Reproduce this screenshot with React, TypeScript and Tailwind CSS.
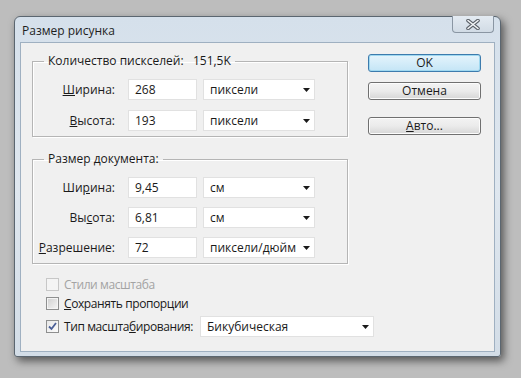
import React from 'react';

const Arrow: React.FC = () => (
  <svg width="7" height="4" viewBox="0 0 7 4" className="shrink-0">
    <path d="M0 0h7L3.5 4z" fill="#1a1a1a" />
  </svg>
);

const Input: React.FC<{ value: string }> = ({ value }) => (
  <div className="w-[69px] h-[21px] bg-white border border-[#e1e1e1] pl-[6px] flex items-center text-[#1a1a1a]">
    {value}
  </div>
);

const Select: React.FC<{ value: string; width?: string }> = ({ value, width = 'w-[112px]' }) => (
  <div className={`${width} shrink-0 h-[21px] bg-white border border-[#e1e1e1] pl-[6px] pr-[4px] flex items-center justify-between text-[#1a1a1a]`}>
    <span className="whitespace-nowrap">{value}</span>
    <Arrow />
  </div>
);

const Row: React.FC<{ label: React.ReactNode; value: string; unit: string }> = ({ label, value, unit }) => (
  <div className="flex items-center">
    <div className="w-[82px] text-right text-[#1a1a1a]">{label}</div>
    <div className="ml-[13px]">
      <Input value={value} />
    </div>
    <div className="ml-[6px]">
      <Select value={unit} />
    </div>
  </div>
);

const GroupBox: React.FC<{ title: React.ReactNode; children: React.ReactNode; gap: string }> = ({ title, children, gap }) => (
  <fieldset className="w-[316px] border border-[#b5b5b5] shadow-[inset_1px_1px_0_#fff,1px_1px_0_#fff] pt-[10px] pb-[5px] m-0 min-w-0">
    <legend className="ml-[11px] px-[4px] h-[16px] leading-[16px] text-[#1a1a1a]">{title}</legend>
    <div className={`flex flex-col ${gap}`}>{children}</div>
  </fieldset>
);

const Button: React.FC<{ children: React.ReactNode; primary?: boolean }> = ({ children, primary }) => (
  <div
    className={
      primary
        ? 'w-[113px] h-[18px] rounded-[3px] border border-[#3d7bad] bg-gradient-to-b from-[#e5f4fc] to-[#c4e5f6] shadow-[inset_0_0_0_1px_#9fd8f0] flex items-center justify-center text-[#1a1a1a]'
        : 'w-[113px] h-[18px] rounded-[3px] border border-[#707070] bg-gradient-to-b from-[#f3f3f3] via-[#ebebeb] to-[#d6d6d6] shadow-[inset_0_0_0_1px_#fcfcfc] flex items-center justify-center text-[#1a1a1a]'
    }
  >
    {children}
  </div>
);

const App: React.FC = () => {
  return (
    <div
      className="w-[521px] h-[378px] bg-[#bdbdbd] pl-[14px] pt-[16px] text-[12px] leading-none"
      style={{ fontFamily: '"Open Sans", "Noto Sans", sans-serif' }}
    >
      {/* window */}
      <div className="w-[487px] h-[341px] rounded-t-[6px] rounded-b-[3px] border border-[#5b6670] bg-gradient-to-b from-[#d5e0eb] via-[#dfe7ef] to-[#d3dde7] shadow-[3px_4px_8px_rgba(0,0,0,0.55)] flex flex-col px-[5px] pb-[4px]">
        {/* title bar */}
        <div className="h-[25px] flex items-start justify-between">
          <div className="pl-[2px] pt-[8px] text-[#1e1e1e]">Размер рисунка</div>
          <div className="w-[42px] h-[17px] -mt-[1px] mr-[1px] rounded-b-[4px] border border-t-0 border-[#8a96a3] bg-gradient-to-b from-[#e4ebf2] to-[#d1dbe5] flex items-center justify-center">
            <svg width="14" height="11" viewBox="0 0 14 11">
              <path d="M2 1.5L12 9.5M12 1.5L2 9.5" stroke="#5b6168" strokeWidth="3.6" strokeLinecap="round" />
              <path d="M2 1.5L12 9.5M12 1.5L2 9.5" stroke="#f4f6f8" strokeWidth="1.6" strokeLinecap="round" />
            </svg>
          </div>
        </div>
        {/* client */}
        <div className="flex-1 bg-[#f0f0f0] border border-[#9fb0c1] flex pl-[11px]">
          <div className="w-[316px] shrink-0 flex flex-col pt-[10px]">
            <GroupBox
              gap="gap-[10px]"
              title={
                <span>
                  Количество пискселей:&nbsp;&nbsp;&nbsp;151,5K
                </span>
              }
            >
              <Row label={<span><u>Ш</u>ирина:</span>} value="268" unit="пиксели" />
              <Row label={<span><u>В</u>ысота:</span>} value="193" unit="пиксели" />
            </GroupBox>
            <div className="mt-[14px]">
              <GroupBox gap="gap-[9px]" title="Размер документа:">
                <Row label={<span>Ши<u>р</u>ина:</span>} value="9,45" unit="см" />
                <Row label={<span>Вы<u>с</u>ота:</span>} value="6,81" unit="см" />
                <Row label={<span><u>Р</u>азрешение:</span>} value="72" unit="пиксели/дюйм" />
              </GroupBox>
            </div>
            <div className="flex flex-col pl-[14px] mt-[14px] whitespace-nowrap tracking-[-0.4px]">
              <div className="flex items-center h-[13px] gap-[5px] text-[#a3a3a3]">
                <div className="w-[13px] h-[13px] shrink-0 border border-[#c7c7c7] bg-[#f4f4f4]" />
                <span>Стили масштаба</span>
              </div>
              <div className="flex items-center h-[13px] gap-[5px] mt-[6px] text-[#1a1a1a]">
                <div className="w-[13px] h-[13px] shrink-0 border border-[#8e8f8f] bg-gradient-to-br from-[#cfcfcf] to-[#f6f6f6] shadow-[inset_0_0_0_1px_#f4f4f4]" />
                <span><u>С</u>охранять пропорции</span>
              </div>
              <div className="flex items-center mt-[6px] text-[#1a1a1a]">
                <div className="w-[13px] h-[13px] shrink-0 border border-[#8e8f8f] bg-gradient-to-br from-[#e8e8e8] to-[#fbfbfb] flex items-center justify-center">
                  <svg width="9" height="9" viewBox="0 0 9 9">
                    <path d="M1 4.5L3.5 7L8 1" stroke="#4a5f97" strokeWidth="1.8" fill="none" />
                  </svg>
                </div>
                <span className="ml-[5px] w-[136px] shrink-0">
                  Тип масшта<u>б</u>ирования:
                </span>
                <div className="tracking-normal">
                  <Select value="Бикубическая" width="w-[174px]" />
                </div>
              </div>
            </div>
          </div>
          <div className="flex flex-col pl-[20px] pt-[11px]">
            <Button primary>OK</Button>
            <div className="mt-[10px]">
              <Button>Отмена</Button>
            </div>
            <div className="mt-[17px]">
              <Button>
                <span><u>А</u>вто...</span>
              </Button>
            </div>
          </div>
        </div>
      </div>
    </div>
  );
};

export default App;
